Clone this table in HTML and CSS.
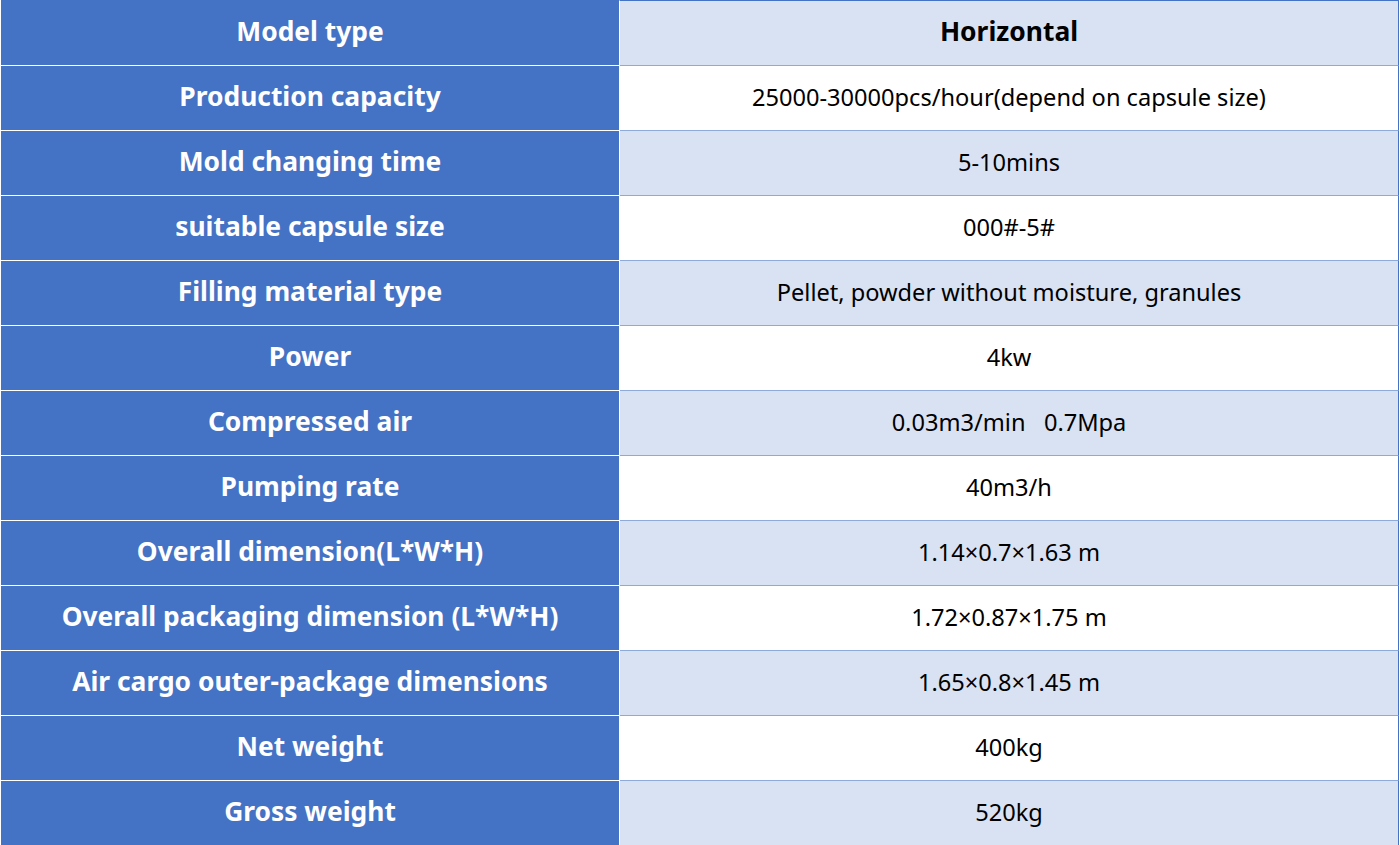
FILE: index.html
```html
<!DOCTYPE html>
<html>
<head>
<meta charset="utf-8">
<link rel="stylesheet" href="styles.css">
</head>
<body>
<table class="spec">
  <colgroup><col class="c-key"><col class="c-val"></colgroup>
  <tbody>
    <tr class="alt"><th>Model type</th><td class="strong">Horizontal</td></tr>
    <tr><th>Production capacity</th><td>25000-30000pcs/hour(depend on capsule size)</td></tr>
    <tr class="alt"><th>Mold changing time</th><td>5-10mins</td></tr>
    <tr><th>suitable capsule size</th><td>000#-5#</td></tr>
    <tr class="alt"><th>Filling material type</th><td>Pellet, powder without moisture, granules</td></tr>
    <tr><th>Power</th><td>4kw</td></tr>
    <tr class="alt"><th>Compressed air</th><td>0.03m3/min&nbsp;&nbsp;&nbsp;0.7Mpa</td></tr>
    <tr><th>Pumping rate</th><td>40m3/h</td></tr>
    <tr class="alt"><th>Overall dimension(L*W*H)</th><td>1.14×0.7×1.63 m</td></tr>
    <tr><th>Overall packaging dimension (L*W*H)</th><td>1.72×0.87×1.75 m</td></tr>
    <tr class="alt"><th>Air cargo outer-package dimensions</th><td>1.65×0.8×1.45 m</td></tr>
    <tr><th>Net weight</th><td>400kg</td></tr>
    <tr class="alt"><th>Gross weight</th><td>520kg</td></tr>
  </tbody>
</table>
</body>
</html>
```

FILE: styles.css
```css
html, body {
  margin: 0;
  padding: 0;
  background: #ffffff;
}
body {
  padding-left: 1px;
  font-family: "Noto Sans", "Open Sans", "Liberation Sans", sans-serif;
}
.spec {
  width: 1398px;
  border-collapse: separate;
  border-spacing: 0;
  table-layout: fixed;
}
.c-key { width: 619px; }
.c-val { width: 779px; }
.spec th, .spec td {
  box-sizing: content-box;
  height: 62px;
  padding: 0 0 2px 0;
  line-height: 1.2;
  text-align: center;
  vertical-align: middle;
  border-bottom: 1px solid #ffffff;
}
.spec th {
  background: #4472c4;
  color: #ffffff;
  font-weight: 700;
  font-size: 26.4px;
  border-right: 1px solid #ffffff;
}
.spec td {
  background: #ffffff;
  color: #000000;
  font-size: 23.6px;
  border-bottom-color: #8eaadb;
  border-right: 1px solid #4472c4;
}
.spec tr:first-child th,
.spec tr:first-child td { border-top: 1px solid #4472c4; }
.spec tr:last-child th,
.spec tr:last-child td { border-bottom: none; }
.spec tr.alt td { background: #d9e2f3; }
.spec td.strong { font-weight: 700; font-size: 26.4px; }
```
